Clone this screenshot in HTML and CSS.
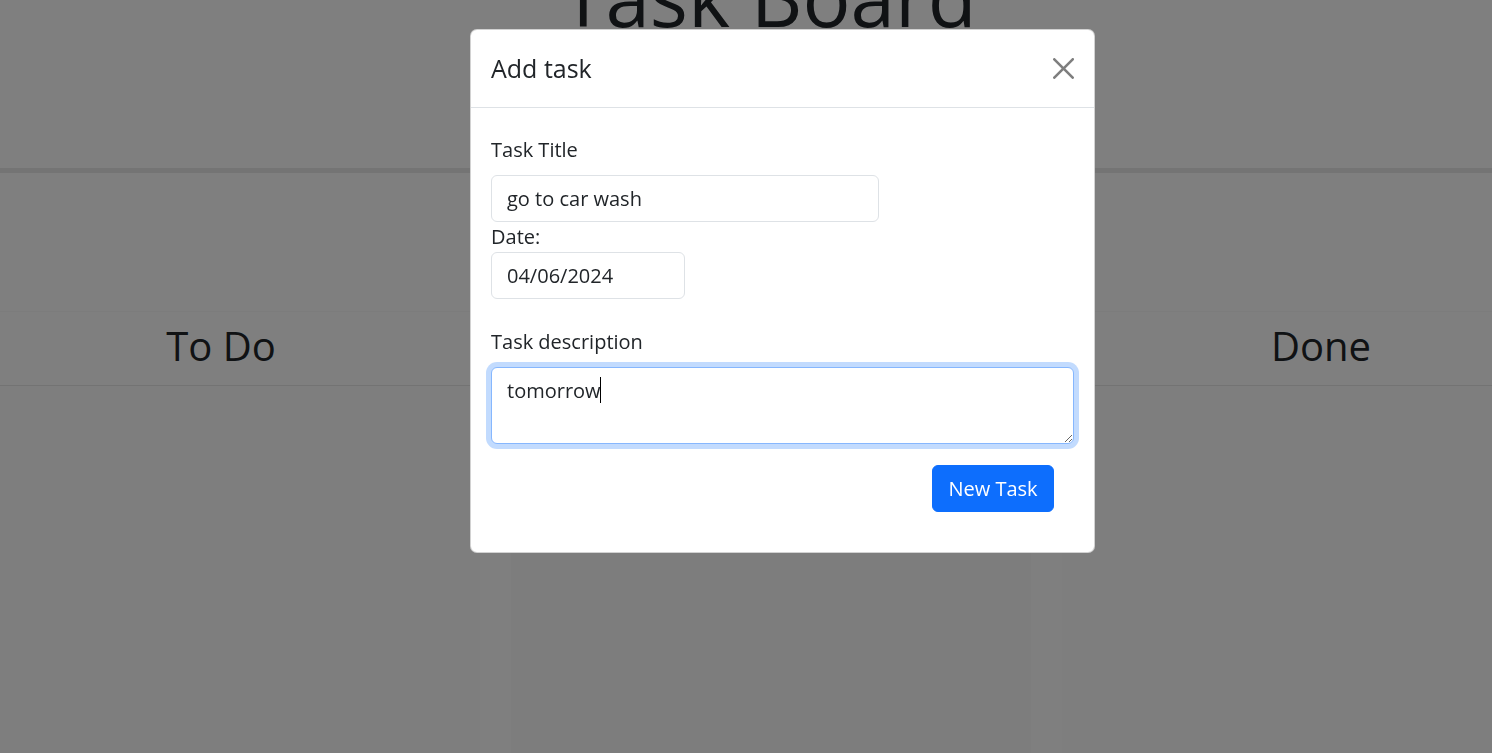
FILE: index.html
```html
<!DOCTYPE html>
<html lang="en">
<head>
<meta charset="utf-8">
<title>Task Board</title>
<link rel="stylesheet" href="styles.css">
</head>
<body>
<div class="page">
  <header class="board-header">
    <h1 class="board-title">Task Board</h1>
  </header>
  <div class="board-gap"></div>
  <div class="col-heads">
    <h2 class="col-head col-todo">To Do</h2>
    <h2 class="col-head col-progress">In Progress</h2>
    <h2 class="col-head col-done">Done</h2>
  </div>
  <div class="lanes">
    <div class="lane lane-side"></div>
    <div class="lane lane-mid"><div class="lane-card"></div></div>
    <div class="lane lane-side lane-grow"></div>
  </div>
</div>

<div class="backdrop"></div>

<div class="modal" role="dialog" aria-labelledby="modal-title">
  <div class="modal-header">
    <h5 class="modal-title" id="modal-title">Add task</h5>
    <svg class="btn-close" width="21" height="21" viewBox="0 0 16 16" aria-label="Close">
      <path d="M.293.293a1 1 0 0 1 1.414 0L8 6.586 14.293.293a1 1 0 1 1 1.414 1.414L9.414 8l6.293 6.293a1 1 0 0 1-1.414 1.414L8 9.414l-6.293 6.293a1 1 0 0 1-1.414-1.414L6.586 8 .293 1.707a1 1 0 0 1 0-1.414z"/>
    </svg>
  </div>
  <form class="modal-body">
    <label class="form-label" for="task-title">Task Title</label>
    <input class="form-control input-title" id="task-title" type="text" value="go to car wash">
    <label class="form-label label-date" for="task-date">Date:</label>
    <input class="form-control input-date" id="task-date" type="text" value="04/06/2024">
    <label class="form-label label-desc" for="task-desc">Task description</label>
    <div class="desc-field">
      <textarea class="form-control textarea-focus" id="task-desc">tomorrow</textarea>
      <span class="caret"></span>
    </div>
    <div class="actions">
      <button class="btn-primary" type="button">New Task</button>
    </div>
  </form>
</div>
</body>
</html>
```

FILE: styles.css
```css
* {
  box-sizing: border-box;
}

html, body {
  margin: 0;
  padding: 0;
}

body {
  width: 1492px;
  height: 753px;
  overflow: hidden;
  background: #ffffff;
  color: #212529;
  font-family: "Open Sans", "Noto Sans", "Liberation Sans", sans-serif;
  font-size: 20px;
  line-height: 30px;
}

/* ---------- page under the backdrop ---------- */
.page {
  width: 1492px;
  height: 753px;
  display: flex;
  flex-direction: column;
}

.board-header {
  height: 173px;
  flex: none;
  display: flex;
  justify-content: center;
  align-items: flex-start;
  padding-left: 46px;
  border-bottom: 5px solid #e8e8e8;
}

.board-title {
  margin: -52px 0 0 0;
  font-size: 80px;
  line-height: 96px;
  font-weight: 400;
  color: #212529;
  white-space: nowrap;
}

.board-gap {
  height: 138px;
  flex: none;
}

.col-heads {
  flex: none;
  display: grid;
  grid-template-columns: 442px 658px 1fr;
  border-top: 1px solid #f9f9f9;
  border-bottom: 1px solid #e6e6e6;
}

.col-head {
  margin: 0;
  text-align: center;
  font-size: 40px;
  line-height: 67px;
  padding-bottom: 6px;
  font-weight: 400;
  color: #212529;
  white-space: nowrap;
}

.col-done {
  padding-left: 50px;
}

.lanes {
  flex: 1;
  display: flex;
}

.lane-side {
  width: 480px;
  background: #fcfcfc;
}

.lane-grow {
  flex: 1;
  width: auto;
}

.lane-mid {
  width: 582px;
  background: #fefefe;
  padding: 0 31px;
  display: flex;
}

.lane-card {
  flex: 1;
  background: #fafafa;
}

/* ---------- backdrop ---------- */
.backdrop {
  position: fixed;
  inset: 0;
  background: rgba(0, 0, 0, 0.5);
}

/* ---------- modal ---------- */
.modal {
  position: fixed;
  top: 29px;
  left: 470px;
  width: 625px;
  background: #ffffff;
  border: 1px solid rgba(0, 0, 0, 0.175);
  border-radius: 7px;
}

.modal-header {
  height: 78px;
  display: flex;
  align-items: center;
  justify-content: space-between;
  padding: 0 20px;
  border-bottom: 1px solid #dee2e6;
}

.modal-title {
  margin: 0;
  font-size: 25px;
  line-height: 37.5px;
  font-weight: 400;
  color: #212529;
}

.btn-close {
  display: block;
  fill: #000000;
  opacity: 0.5;
}

.modal-body {
  margin: 0;
  padding: 27px 20px 40px;
}

.form-label {
  display: block;
  line-height: 30px;
  margin-bottom: 10px;
  color: #212529;
}

.label-date {
  margin-bottom: 0;
}

.label-desc {
  margin-top: 28px;
}

.form-control {
  display: block;
  height: 47px;
  padding: 7.5px 15px;
  border: 1px solid #dee2e6;
  border-radius: 6px;
  background: #ffffff;
  color: #212529;
  font-family: "Open Sans", "Noto Sans", "Liberation Sans", sans-serif;
  font-size: 20px;
  line-height: 30px;
  outline: none;
  margin: 0;
}

.input-title {
  width: 388px;
}

.input-date {
  width: 194px;
}

.desc-field {
  position: relative;
}

.textarea-focus {
  width: 100%;
  height: 77px;
  resize: vertical;
  border-color: #86b7fe;
  box-shadow: 0 0 0 5px rgba(13, 110, 253, 0.25);
}

.caret {
  position: absolute;
  left: 109px;
  top: 10px;
  width: 1px;
  height: 26px;
  background: #000000;
}

.actions {
  display: flex;
  justify-content: flex-end;
  padding-right: 20px;
  margin-top: 21px;
}

.btn-primary {
  width: 122px;
  height: 47px;
  padding: 0;
  border: 1px solid #0d6efd;
  border-radius: 6px;
  background: #0d6efd;
  color: #ffffff;
  font-family: "Open Sans", "Noto Sans", "Liberation Sans", sans-serif;
  font-size: 20px;
  line-height: 30px;
}
```
